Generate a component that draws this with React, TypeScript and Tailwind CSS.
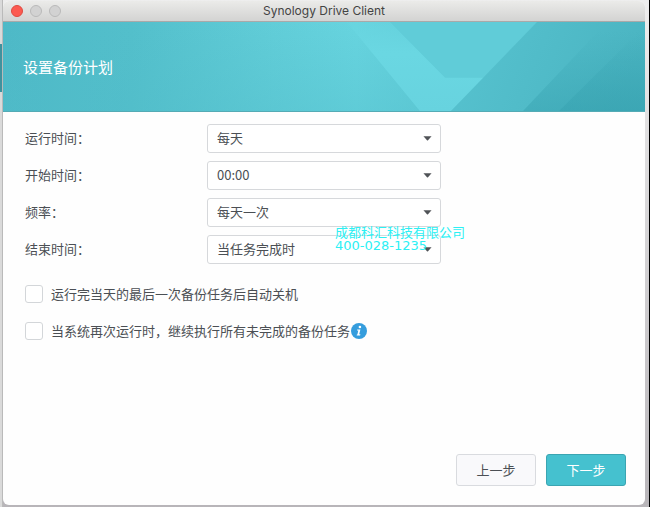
import { useState } from 'react';

const fields = [
  { id: 'run-day', label: '运行时间：', options: ['每天', '工作日', '周末'] },
  { id: 'start-time', label: '开始时间：', options: ['00:00', '06:00', '12:00', '18:00'] },
  { id: 'frequency', label: '频率：', options: ['每天一次', '每小时'] },
  { id: 'end-time', label: '结束时间：', options: ['当任务完成时', '06:00', '12:00'] },
];

function TitleBar() {
  return (
    <div className="relative flex h-[21px] items-center justify-center border-b border-[#a9a9a9] bg-gradient-to-b from-[#ebebe9] to-[#d3d3d2]">
      <div className="absolute left-2 flex gap-[7px]">
        <button aria-label="Close" className="h-3 w-3 rounded-full border border-[#de4a40] bg-[#fc5a51]" />
        <button aria-label="Minimize" className="h-3 w-3 rounded-full border border-[#b9b9b9] bg-[#d2d2d2]" />
        <button aria-label="Zoom" className="h-3 w-3 rounded-full border border-[#b9b9b9] bg-[#d2d2d2]" />
      </div>
      <h1 className="font-['Inter',sans-serif] text-[12px] leading-5 text-[#444444]">Synology Drive Client</h1>
    </div>
  );
}

function Banner() {
  return (
    <div className="relative flex h-[90px] items-center border-b border-[#55abb5] px-5">
      <svg className="absolute inset-0 h-full w-full" viewBox="0 0 642 90" preserveAspectRatio="none" aria-hidden="true">
        <defs>
          <linearGradient id="base" x1="0" x2="1" y1="0" y2="0">
            <stop offset="0" stopColor="#4eb9c7" />
            <stop offset="0.2" stopColor="#53bfcb" />
            <stop offset="0.42" stopColor="#61cdd8" />
            <stop offset="0.55" stopColor="#67d4df" />
            <stop offset="0.7" stopColor="#60cbd7" />
            <stop offset="1" stopColor="#5bc6d2" />
          </linearGradient>
          <linearGradient id="shade" x1="0" x2="0" y1="0" y2="1">
            <stop offset="0" stopColor="#50bcc9" stopOpacity="0" />
            <stop offset="1" stopColor="#50bcc9" stopOpacity="0.35" />
          </linearGradient>
          <linearGradient id="beam" x1="0" x2="0" y1="0" y2="1">
            <stop offset="0" stopColor="#6ad7e2" stopOpacity="0.2" />
            <stop offset="0.35" stopColor="#6ad7e2" />
            <stop offset="1" stopColor="#67d3df" />
          </linearGradient>
          <linearGradient id="dark" x1="0" x2="1" y1="0" y2="0.2">
            <stop offset="0" stopColor="#57c3d0" />
            <stop offset="1" stopColor="#4bb5c2" />
          </linearGradient>
          <linearGradient id="fade" x1="0" x2="0" y1="0" y2="1">
            <stop offset="0.1" stopColor="#37a2b0" stopOpacity="0" />
            <stop offset="1" stopColor="#37a2b0" stopOpacity="0.5" />
          </linearGradient>
        </defs>
        <rect width="642" height="90" fill="url(#base)" />
        <path d="M0 0H344L417 90H0Z" fill="url(#shade)" />
        <path d="M344 0H387L442 56H481L448 90H417Z" fill="url(#beam)" />
        <path d="M387 0H534L480 56H442Z" fill="#60ccd8" />
        <path d="M534 0H642V90H448Z" fill="url(#dark)" />
        <path d="M604 0H642V90H520Z" fill="url(#fade)" />
        <path d="M642 4V90H556Z" fill="url(#fade)" />
      </svg>
      <h2 className="relative text-[15px] leading-6 text-white">设置备份计划</h2>
    </div>
  );
}

function InfoIcon() {
  return (
    <svg className="h-4 w-4 shrink-0" viewBox="0 0 16 16" role="img" aria-label="信息">
      <circle cx="8" cy="8" r="8" fill="#359ddd" />
      <circle cx="8.9" cy="4" r="1.3" fill="white" />
      <path d="M6.2 6.5H9.4L8.2 11.3H9.4L9.1 12.5H5.7L5.9 11.4H6.4L7.3 7.6H6Z" fill="white" />
    </svg>
  );
}

export default function App() {
  const [shutdown, setShutdown] = useState(false);
  const [resume, setResume] = useState(false);

  const checkbox =
    'h-[18px] w-[18px] shrink-0 appearance-none rounded-[3px] border border-[#d3d6d9] bg-white checked:bg-[#45c2d0]';

  return (
    <div className="flex min-h-screen border-r border-black bg-[#c9c8ca] font-['Noto_Sans_CJK_SC',sans-serif] text-[13px] leading-5 text-[#4b4f54]">
      {/* Edge of the window behind */}
      <div className="flex w-[3px] shrink-0 flex-col border-r border-[#bababa] bg-[#dadada]">
        <div className="h-11" />
        <div className="h-12 bg-[#3f929e]" />
      </div>

      <div className="flex min-w-0 flex-1 flex-col bg-gradient-to-b from-[#eeeeee] to-[#b8b5b9] pt-px pr-1 pb-[2px]">
        <main className="relative flex flex-1 flex-col overflow-hidden rounded-md bg-[#fefefe]">
          <TitleBar />
          <Banner />

          <form className="flex flex-1 flex-col pl-[22px] pr-[19px] pt-3" onSubmit={(e) => e.preventDefault()}>
            <div className="flex flex-col gap-2">
              {fields.map((field) => (
                <div key={field.id} className="flex h-[29px] items-center">
                  <label htmlFor={field.id} className="w-[182px] shrink-0 pb-px">
                    {field.label}
                  </label>
                  <div className="relative w-[234px]">
                    <select
                      id={field.id}
                      className="block h-[29px] w-full appearance-none rounded-[3px] border border-[#d6d8db] bg-white pb-px pl-[9px] pr-6 leading-5"
                    >
                      {field.options.map((option) => (
                        <option key={option}>{option}</option>
                      ))}
                    </select>
                    <svg className="pointer-events-none absolute right-[9px] top-3 h-[5px] w-[9px]" viewBox="0 0 10 5" aria-hidden="true">
                      <path d="M0.5 0H9.5L5.6 4.4Q5 5 4.4 4.4Z" fill="#505357" />
                    </svg>
                  </div>
                </div>
              ))}
            </div>

            <div className="mt-[21px] flex flex-col gap-[19px]">
              <div className="flex h-[18px] items-center gap-2">
                <input id="shutdown" type="checkbox" className={checkbox} checked={shutdown} onChange={() => setShutdown(!shutdown)} />
                <label htmlFor="shutdown">运行完当天的最后一次备份任务后自动关机</label>
              </div>
              <div className="flex h-[18px] items-center gap-2">
                <input id="resume" type="checkbox" className={checkbox} checked={resume} onChange={() => setResume(!resume)} />
                <div className="flex items-center gap-px">
                  <label htmlFor="resume">当系统再次运行时，继续执行所有未完成的备份任务</label>
                  <InfoIcon />
                </div>
              </div>
            </div>

            <div className="mt-auto flex justify-end gap-[10px] pb-[19px]">
              <button type="button" className="h-8 w-20 rounded-[3px] border border-[#d9dbdf] bg-[#f9f9fb]">
                上一步
              </button>
              <button type="submit" className="h-8 w-20 rounded-[3px] border border-[#3ba5b2] bg-[#45c1cf] text-white">
                下一步
              </button>
            </div>
          </form>

          {/* Company stamp lying over the form */}
          <div className="pointer-events-none absolute left-[332px] top-[225px] font-['DejaVu_Sans','Noto_Sans_CJK_SC',sans-serif] leading-[13px] text-[#2cf0f4]">
            <p>成都科汇科技有限公司</p>
            <p>400-028-1235</p>
          </div>
        </main>
      </div>
    </div>
  );
}
